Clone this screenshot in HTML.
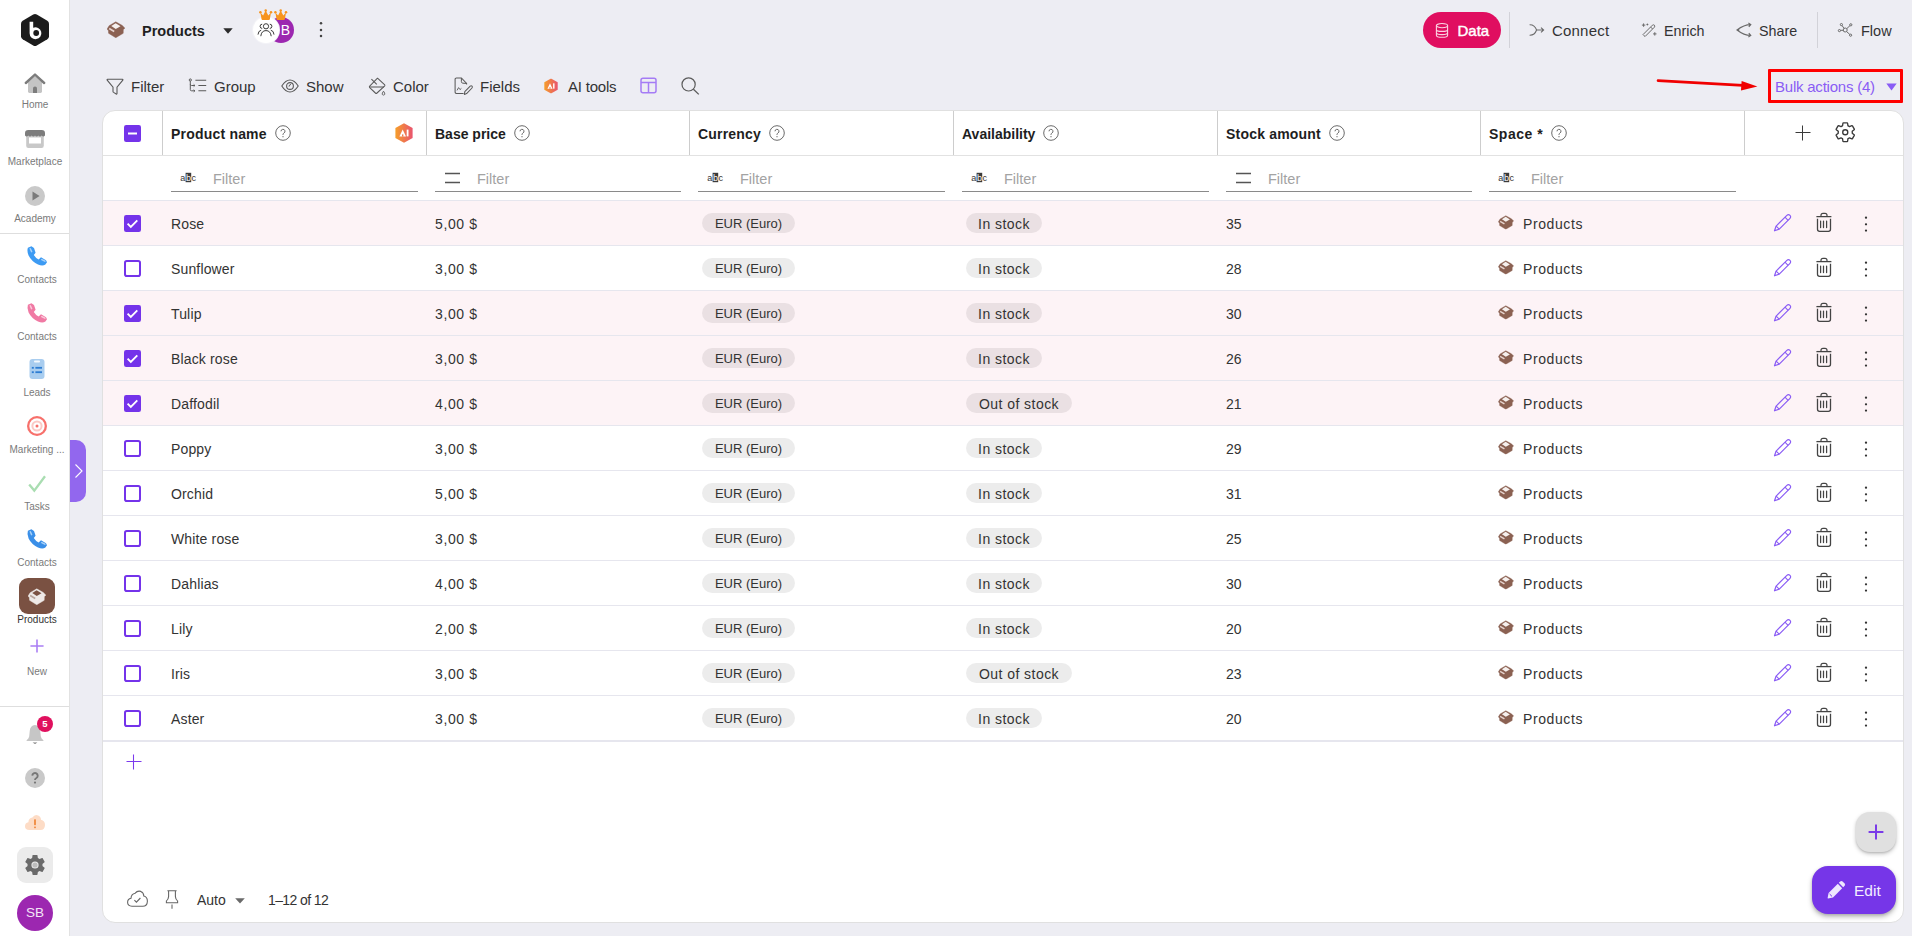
<!DOCTYPE html><html><head><meta charset="utf-8"><style>*{box-sizing:border-box;margin:0;padding:0}
html,body{width:1912px;height:936px;overflow:hidden}
body{background:#EDEDF3;font-family:"Liberation Sans",sans-serif;color:#222;position:relative}
svg{display:block;overflow:visible}
.abs{position:absolute}
/* sidebar */
#sb{position:absolute;left:0;top:0;width:70px;height:936px;background:#fff;border-right:1px solid #E2E2E2}
.sbi{position:absolute;left:0;width:69px}
.sbl{position:absolute;left:0;width:74px;text-align:center;font-size:10px;color:#7a7a7a;line-height:12px;white-space:nowrap}
.sep{position:absolute;left:0;width:69px;height:1px;background:#DEDEDE}
#tab{position:absolute;left:70px;top:440px;width:16px;height:62px;background:#9267EE;border-radius:0 10px 10px 0}
/* top */
.tt{position:absolute;font-size:15px;line-height:18px;color:#333;white-space:nowrap}
.ti{position:absolute}
/* card */
#card{position:absolute;left:102px;top:110px;width:1802px;height:813px;background:#fff;border:1px solid #E0E0E0;border-radius:13px;overflow:hidden}
.hrow{position:absolute;left:0;top:0;width:100%;height:45px;border-bottom:1px solid #E2E2E2}
.hc{position:absolute;top:0;height:44px;display:flex;align-items:center;padding-left:8px}
.ht{font-size:14px;font-weight:700;color:#1e1e1e;white-space:nowrap}
.help{margin-left:8px;color:#666}
.hc .ht{position:relative;top:1px}
.aihdr{position:absolute;right:13px;top:12px}
.vd{position:absolute;top:0;width:1px;height:44px;background:#CDCDCD}
.hplus{position:absolute;left:50px;top:14px;color:#3a3a3a}
.hgear{position:absolute;left:88.8px;top:10.1px}
.frow{position:absolute;left:0;top:45px;width:100%;height:45px;border-bottom:1px solid #E6E6EE}
.fc{position:absolute;top:0;height:36px;border-bottom:1px solid #8a8a8a}
.fi{position:absolute;left:9px;top:16px}
.ph{position:absolute;left:42px;top:15px;font-size:14.5px;line-height:17px;color:#A3A3A3}
.row{position:absolute;left:0;width:100%;height:45px;border-bottom:1px solid #E6E6EE;background:#fff}
.row.sel{background:#FDF3F6}
.cb{position:absolute;top:14px}
.ct{position:absolute;top:14px;font-size:14px;line-height:18px;color:#333;white-space:nowrap}
.chip{position:absolute;top:12px;height:20px;border-radius:10px;background:rgba(0,0,0,0.075);font-size:14px;line-height:22px;letter-spacing:0.45px;text-align:center;color:#333;width:76px;white-space:nowrap}
.chip.eur{width:93px;font-size:13px;letter-spacing:0}
.pr{letter-spacing:0.6px}
.sp{letter-spacing:0.6px}
.sbox{position:absolute;top:14px}
.ract{position:absolute;top:13px}
#addrow{position:absolute;left:23px;top:643px;color:#7C3AED}
/* footer */
.ft{position:absolute;font-size:14px;line-height:18px;color:#333;white-space:nowrap}

.ct.nm{letter-spacing:0.15px}
</style></head><body>
<svg width="0" height="0" style="position:absolute">
<defs>
<linearGradient id="g-ai" x1="0" y1="0" x2="1" y2="0"><stop offset="0" stop-color="#F59E2A"/><stop offset="1" stop-color="#E9546E"/></linearGradient>
<symbol id="i-help" viewBox="0 0 16 16"><circle cx="8" cy="8" r="7.3" fill="none" stroke="#6a6a6a" stroke-width="1"/><path d="M6 6.3a2 2 0 1 1 2.9 1.8c-.6.35-.9.7-.9 1.4v.5" fill="none" stroke="#6a6a6a" stroke-width="1"/><circle cx="8" cy="11.7" r=".65" fill="#6a6a6a"/></symbol>
<symbol id="i-ai" viewBox="0 0 18 20"><path d="M9 0.3L17.6 5.1V14.9L9 19.7L0.4 14.9V5.1Z" fill="url(#g-ai)"/><path d="M4.4 13.4L7.7 6.4L11 13.4Z" fill="#fff"/><rect x="7" y="11.4" width="1.4" height="2.2" fill="#EE7B4B"/><rect x="11.7" y="6.6" width="1.8" height="6.8" fill="#fff"/></symbol>
<symbol id="i-abc" viewBox="0 0 18 12"><text x="0.3" y="9" font-family="Liberation Sans" font-size="9" fill="#333">a</text><rect x="5.6" y="0.8" width="5.6" height="9.4" fill="#3a3a3a"/><text x="5.9" y="9" font-family="Liberation Sans" font-size="9" fill="#fff">b</text><text x="11.6" y="9" font-family="Liberation Sans" font-size="9" fill="#333">c</text></symbol>
<symbol id="i-eq" viewBox="0 0 18 12"><path d="M1 1.5H16M1 10.5H16" stroke="#555" stroke-width="1.4"/></symbol>
<symbol id="i-plus" viewBox="0 0 16 16"><path d="M7.5 0.5V15.5M0.5 7.5H15.5" stroke="currentColor" stroke-width="1.05"/></symbol>
<symbol id="i-gear-o" viewBox="0 0 24 24"><path d="M19.43 12.98c.04-.32.07-.64.07-.98 0-.34-.03-.66-.07-.98l2.11-1.65c.19-.15.24-.42.12-.64l-2-3.46c-.09-.16-.26-.25-.44-.25-.06 0-.12.01-.17.03l-2.49 1c-.52-.4-1.08-.73-1.69-.98l-.38-2.65C14.460 2.180 14.250 2 14 2h-4c-.25 0-.46.18-.49.42l-.38 2.65c-.61.25-1.170.59-1.690.98l-2.490-1c-.06-.02-.12-.03-.18-.03-.17 0-.34.09-.43.25l-2 3.46c-.13.22-.07.49.12.64l2.11 1.65c-.04.32-.07.65-.07.98 0 .33.03.66.07.98l-2.11 1.65c-.19.15-.24.42-.12.64l2 3.46c.09.16.26.25.44.25.06 0 .12-.01.17-.03l2.49-1c.52.4 1.08.73 1.69.98l.38 2.65c.03.24.24.42.49.42h4c.25 0 .46-.18.49-.42l.38-2.65c.61-.25 1.17-.59 1.69-.98l2.49 1c.06.02.12.03.18.03.17 0 .34-.09.43-.25l2-3.46c.12-.22.07-.49-.12-.64l-2.11-1.65z" fill="none" stroke="#3a3a3a" stroke-width="1.45" stroke-linejoin="round"/><circle cx="12" cy="12" r="2.7" fill="none" stroke="#3a3a3a" stroke-width="1.45"/></symbol>
<symbol id="i-box" viewBox="0 0 16 15"><path d="M7.8 0.7L13.6 3.9L15.9 6.3L14.5 7.4L14.4 10.9L7.8 14.8L1.4 10.9L1.3 8.6L0.1 7.1L1.9 4.1Z" fill="#8B6152" stroke="#8B6152" stroke-width="0.4" stroke-linejoin="round"/><path d="M3.8 4.3L7.7 1.9L12 4.7L7.8 7.1Z" fill="#F6F0EE"/><path d="M1.9 6.6L6.4 9.2" stroke="#E6D3CE" stroke-width="1.5"/></symbol>
<symbol id="i-box-w" viewBox="0 0 16 15"><path d="M7.8 0.7L13.6 3.9L15.9 6.3L14.5 7.4L14.4 10.9L7.8 14.8L1.4 10.9L1.3 8.6L0.1 7.1L1.9 4.1Z" fill="#EEE9E7" stroke="#EEE9E7" stroke-width="0.4" stroke-linejoin="round"/><path d="M3.8 4.3L7.7 1.9L12 4.7L7.8 7.1Z" fill="#7A5142"/><path d="M1.9 6.6L6.4 9.2" stroke="#B8A39B" stroke-width="1.5"/></symbol>
<symbol id="i-pencil" viewBox="0 0 20 20"><path d="M1.5 18.8L3.12 14.06L13.87 3.31A2.2 2.2 0 0 1 16.99 6.43L6.24 17.18Z" fill="none" stroke="#8A5CF5" stroke-width="1.2" stroke-linejoin="round"/><path d="M3.12 14.06L6.24 17.18M11.96 5.22L15.08 8.34" stroke="#8A5CF5" stroke-width="1.1"/></symbol>
<symbol id="i-trash" viewBox="0 0 16 20"><path d="M0.4 4.6H15.4" stroke="#444" stroke-width="1.3"/><path d="M5 4.4V3.2Q5 1.3 7 1.3H9Q11 1.3 11 3.2V4.4" fill="none" stroke="#444" stroke-width="1.2"/><path d="M1.5 6.8V17.2Q1.5 19.3 3.6 19.3H12.4Q14.5 19.3 14.5 17.2V6.8" fill="none" stroke="#444" stroke-width="1.3"/><path d="M4.6 9V15.6M7.5 9V15.6M10.6 9V15.6" stroke="#444" stroke-width="1.25" stroke-linecap="round"/></symbol>
<symbol id="i-kebab" viewBox="0 0 4 18"><circle cx="2" cy="2.7" r="1.15" fill="#333"/><circle cx="2" cy="9.3" r="1.15" fill="#333"/><circle cx="2" cy="15.6" r="1.15" fill="#333"/></symbol>
<symbol id="i-cb-on" viewBox="0 0 17 17"><rect x="0" y="0" width="17" height="17" rx="2.2" fill="#7433EA"/><path d="M3.6 8.7L6.8 11.9L13.3 5.4" fill="none" stroke="#fff" stroke-width="1.9"/></symbol>
<symbol id="i-cb-off" viewBox="0 0 17 17"><rect x="1" y="1" width="15" height="15" rx="1.8" fill="none" stroke="#7433EA" stroke-width="2"/></symbol>
<symbol id="i-cb-ind" viewBox="0 0 17 17"><rect x="0" y="0" width="17" height="17" rx="2.2" fill="#7433EA"/><path d="M4 8.5H13" stroke="#fff" stroke-width="1.9"/></symbol>
</defs>
</svg>

<div id="sb">
<svg class="abs" style="left:21px;top:14px" width="28" height="32" viewBox="0 0 28 32"><path d="M12.2 0.6Q14 -0.4 15.8 0.6L26.3 6.7Q28 7.7 28 9.7V22.3Q28 24.3 26.3 25.3L15.8 31.4Q14 32.4 12.2 31.4L1.7 25.3Q0 24.3 0 22.3V9.7Q0 7.7 1.7 6.7Z" fill="#1C1C1C"/><path d="M8.6 7.8H12.2V13.8A5.9 5.9 0 1 1 8.6 19.2Z" fill="#fff"/><circle cx="15.2" cy="19" r="2.9" fill="#1C1C1C"/></svg>
<svg class="abs" style="left:25px;top:73px" width="20" height="20" viewBox="0 0 20 20"><path d="M3 9.2V18.6Q3 20 4.4 20H15.6Q17 20 17 18.6V9.2L10 3.2Z" fill="#C4C4C4"/><path d="M0.8 10L10 1.6L19.2 10" fill="none" stroke="#7C7C7C" stroke-width="2.4" stroke-linejoin="round" stroke-linecap="round"/><path d="M8 20V15.2Q8 13.4 10 13.4Q12 13.4 12 15.2V20Z" fill="#7C7C7C"/></svg>
<div class="sbl" style="left:-2px;top:99px">Home</div>
<svg class="abs" style="left:25px;top:130px" width="20" height="18" viewBox="0 0 20 18"><rect x="1.2" y="4" width="17.6" height="14" rx="2.2" fill="#C8C8C8"/><rect x="4" y="7.5" width="12" height="6" fill="#fff"/><path d="M0 3.3Q0 0 3.3 0H16.7Q20 0 20 3.3V5.6Q18.3 7.4 16.7 5.6Q15 7.4 13.3 5.6Q11.7 7.4 10 5.6Q8.3 7.4 6.7 5.6Q5 7.4 3.3 5.6Q1.7 7.4 0 5.6Z" fill="#7C7C7C"/></svg>
<div class="sbl" style="left:-2px;top:156px">Marketplace</div>
<svg class="abs" style="left:25px;top:186px" width="20" height="20" viewBox="0 0 20 20"><circle cx="10" cy="10" r="10" fill="#C9C9C9"/><path d="M7.5 5.6L14.6 10L7.5 14.4Z" fill="#7A7A7A"/></svg>
<div class="sbl" style="left:-2px;top:213px">Academy</div>
<div class="sep" style="top:233px"></div>
<svg class="abs" style="left:27px;top:246px" width="20" height="20" viewBox="0 0 20 20"><path d="M4.4 0.2L0.9 1.8Q-0.3 5.2 1.6 9.6Q4.6 15.6 11 18.6Q15.6 20.6 18.4 18.6L20 16.2L19 14.2L14 11.2L11.6 13.4Q8.6 12 6.8 9L8.6 6.8L7 2Z" fill="#3D9BF3"/><path d="M3.3 2.8L4.6 5.6M14.8 13.6L17.9 15.2" stroke="#A8D2FA" stroke-width="1.5" stroke-linecap="round"/></svg>
<div class="sbl" style="left:0px;top:274px">Contacts</div>
<svg class="abs" style="left:27px;top:303px" width="20" height="20" viewBox="0 0 20 20"><path d="M4.4 0.2L0.9 1.8Q-0.3 5.2 1.6 9.6Q4.6 15.6 11 18.6Q15.6 20.6 18.4 18.6L20 16.2L19 14.2L14 11.2L11.6 13.4Q8.6 12 6.8 9L8.6 6.8L7 2Z" fill="#F07AA4"/><path d="M3.3 2.8L4.6 5.6M14.8 13.6L17.9 15.2" stroke="#FAC8DA" stroke-width="1.5" stroke-linecap="round"/></svg>
<div class="sbl" style="left:0px;top:331px">Contacts</div>
<svg class="abs" style="left:29px;top:359px" width="16" height="20" viewBox="0 0 16 20"><rect x="0.5" y="0" width="15" height="20" rx="3" fill="#A9CDEF"/><rect x="5" y="1.6" width="6" height="1.8" rx=".9" fill="#F4F9FE"/><rect x="2.8" y="7.9" width="2" height="1.8" fill="#2D7DD3"/><rect x="6.4" y="7.9" width="6.6" height="1.8" fill="#2D7DD3"/><rect x="2.8" y="12.3" width="2" height="1.8" fill="#2D7DD3"/><rect x="6.4" y="12.3" width="6.6" height="1.8" fill="#2D7DD3"/></svg>
<div class="sbl" style="left:0px;top:387px">Leads</div>
<svg class="abs" style="left:27px;top:416px" width="20" height="20" viewBox="0 0 20 20"><circle cx="10" cy="10" r="10" fill="#F7706B"/><circle cx="10" cy="10" r="7.7" fill="#fff"/><circle cx="10" cy="10" r="5.6" fill="#FBC9C6"/><circle cx="10" cy="10" r="3.6" fill="#fff"/><circle cx="10" cy="10" r="1.5" fill="#F7706B"/></svg>
<div class="sbl" style="left:0px;top:444px">Marketing ...</div>
<svg class="abs" style="left:28px;top:475px" width="18" height="17" viewBox="0 0 18 17"><path d="M1.2 9.4L6.3 15.6L17 1.2" fill="none" stroke="#A9DDB1" stroke-width="2.3"/></svg>
<div class="sbl" style="left:0px;top:501px">Tasks</div>
<svg class="abs" style="left:27px;top:529px" width="20" height="20" viewBox="0 0 20 20"><path d="M4.4 0.2L0.9 1.8Q-0.3 5.2 1.6 9.6Q4.6 15.6 11 18.6Q15.6 20.6 18.4 18.6L20 16.2L19 14.2L14 11.2L11.6 13.4Q8.6 12 6.8 9L8.6 6.8L7 2Z" fill="#3A8FE8"/><path d="M3.3 2.8L4.6 5.6M14.8 13.6L17.9 15.2" stroke="#A8D0F6" stroke-width="1.5" stroke-linecap="round"/></svg>
<div class="sbl" style="left:0px;top:557px">Contacts</div>
<div class="abs" style="left:19px;top:578px;width:36px;height:36px;border-radius:9px;background:#7A5142"></div>
<svg class="abs" style="left:28px;top:588px" width="18" height="17" viewBox="0 0 16 15"><use href="#i-box-w"/></svg>
<div class="sbl" style="left:0px;top:614px;color:#333">Products</div>
<svg class="abs" style="left:30px;top:639px;color:#A97DF4" width="14" height="14" viewBox="0 0 16 16"><path d="M8 0.5V15.5M0.5 8H15.5" stroke="#A97DF4" stroke-width="1.8"/></svg>
<div class="sbl" style="left:0px;top:666px">New</div>
<div class="sep" style="top:706px"></div>
<svg class="abs" style="left:26px;top:724px" width="18" height="21" viewBox="0 0 18 21"><path d="M9 1Q13.8 1.2 14.3 7.2L14.8 12.6Q15.2 14.6 17.4 16.2V17H0.6V16.2Q2.8 14.6 3.2 12.6L3.7 7.2Q4.2 1.2 9 1Z" fill="#C6C6C6"/><path d="M6.6 18.6H11.4L9 20Z" fill="#7A7A7A"/></svg>
<div class="abs" style="left:37px;top:716px;width:16px;height:16px;border-radius:8px;background:#E0105E;color:#fff;font-size:9.5px;font-weight:700;line-height:16px;text-align:center">5</div>
<svg class="abs" style="left:25px;top:768px" width="20" height="20" viewBox="0 0 20 20"><circle cx="10" cy="10" r="10" fill="#C9C9C9"/><path d="M7.3 7.6A2.7 2.7 0 1 1 11.4 10Q10 10.8 10 12" fill="none" stroke="#777" stroke-width="1.9"/><circle cx="10" cy="14.6" r="1.1" fill="#777"/></svg>
<svg class="abs" style="left:25px;top:814px" width="20" height="16" viewBox="0 0 20 16"><path d="M4.4 16Q0 16 0 12.2Q0 8.8 3.4 8.3Q3.6 4.2 7.4 3.6Q9.6 0 13.2 1.4Q16 2.6 16 5.8Q20 6.6 20 11Q19.8 16 15.6 16Z" fill="#FDDCC6"/><rect x="9.1" y="5.2" width="1.8" height="6" rx=".6" fill="#F0893E"/><rect x="9.1" y="12.4" width="1.8" height="1.8" rx=".6" fill="#F0893E"/></svg>
<div class="abs" style="left:17px;top:847px;width:36px;height:36px;border-radius:9px;background:#EBEBEB"></div>
<svg class="abs" style="left:23px;top:853px" width="24" height="24" viewBox="0 0 24 24"><path d="M19.43 12.98c.04-.32.07-.64.07-.98 0-.34-.03-.66-.07-.98l2.11-1.65c.19-.15.24-.42.12-.64l-2-3.46c-.09-.16-.26-.25-.44-.25-.06 0-.12.01-.17.03l-2.49 1c-.52-.4-1.08-.73-1.69-.98l-.38-2.65C14.460 2.180 14.250 2 14 2h-4c-.25 0-.46.18-.49.42l-.38 2.65c-.61.25-1.170.59-1.690.98l-2.490-1c-.06-.02-.12-.03-.18-.03-.17 0-.34.09-.43.25l-2 3.46c-.13.22-.07.49.12.64l2.11 1.65c-.04.32-.07.65-.07.98 0 .33.03.66.07.98l-2.11 1.65c-.19.15-.24.42-.12.64l2 3.46c.09.16.26.25.44.25.06 0 .12-.01.17-.03l2.49-1c.52.4 1.08.73 1.69.98l.38 2.65c.03.24.24.42.49.42h4c.25 0 .46-.18.49-.42l.38-2.65c.61-.25 1.17-.59 1.69-.98l2.49 1c.06.02.12.03.18.03.17 0 .34-.09.43-.25l2-3.46c.12-.22.07-.49-.12-.64l-2.11-1.65z" fill="#6A6A6A"/><circle cx="12" cy="12" r="3.6" fill="#EBEBEB"/><circle cx="12" cy="12" r="2.6" fill="#BDBDBD"/></svg>
<div class="abs" style="left:17px;top:895px;width:36px;height:36px;border-radius:18px;background:#9C27B0;color:#F3E5F6;font-size:13.5px;line-height:36px;text-align:center">SB</div>
</div>
<div id="tab"><svg class="abs" style="left:5px;top:24px" width="8" height="14" viewBox="0 0 8 14"><path d="M0.5 0.5L7 7L0.5 13.5" fill="none" stroke="#fff" stroke-width="1.1"/></svg></div>

<svg class="abs" style="left:107px;top:21px" width="18" height="17" viewBox="0 0 16 15"><use href="#i-box"/></svg>
<div class="tt" style="left:142px;top:22px;font-size:14.5px;font-weight:700;color:#1f1f1f">Products</div>
<svg class="abs" style="left:223px;top:28px" width="10" height="6" viewBox="0 0 10 6"><path d="M0.3 0.3H9.7L5 5.8Z" fill="#2b2b2b"/></svg>
<div class="abs" style="left:268px;top:17px;width:26px;height:26px;border-radius:13px;background:#9C27B0;color:#fff;font-size:14px;line-height:26px;text-align:right;padding-right:4px">B</div>
<div class="abs" style="left:253px;top:17px;width:26px;height:26px;border-radius:13px;background:#fff;box-shadow:0 0 0 1px #F3F3F7"></div>
<svg class="abs" style="left:257px;top:22px" width="18" height="15" viewBox="0 0 18 15"><circle cx="9" cy="4.3" r="2.6" fill="none" stroke="#3a3a3a" stroke-width="1"/><path d="M3.8 14.2Q4.4 8.6 9 8.6Q13.6 8.6 14.2 14.2" fill="none" stroke="#3a3a3a" stroke-width="1"/><path d="M5.2 2.2A2 2 0 0 0 5.2 6.4M12.8 2.2A2 2 0 0 1 12.8 6.4M1 12.6Q1.2 8.8 4.2 8.2M17 12.6Q16.8 8.8 13.8 8.2" fill="none" stroke="#3a3a3a" stroke-width="1"/></svg>
<svg class="abs" style="left:259px;top:8.8px" width="13.4" height="11" viewBox="0 0 13.2 11"><path d="M1.3 3.4L4 6.4L6.6 1.6L9.2 6.4L11.9 3.4L10.8 10Q10.6 10.9 9.8 10.9H3.4Q2.6 10.9 2.4 10Z" fill="#F7941D"/><circle cx="1.3" cy="3.2" r="1.25" fill="#F7941D"/><circle cx="6.6" cy="1.4" r="1.25" fill="#F7941D"/><circle cx="11.9" cy="3.2" r="1.25" fill="#F7941D"/></svg>
<svg class="abs" style="left:274px;top:8.8px" width="13.4" height="11" viewBox="0 0 13.2 11"><path d="M1.3 3.4L4 6.4L6.6 1.6L9.2 6.4L11.9 3.4L10.8 10Q10.6 10.9 9.8 10.9H3.4Q2.6 10.9 2.4 10Z" fill="#F7941D"/><circle cx="1.3" cy="3.2" r="1.25" fill="#F7941D"/><circle cx="6.6" cy="1.4" r="1.25" fill="#F7941D"/><circle cx="11.9" cy="3.2" r="1.25" fill="#F7941D"/></svg>
<svg class="abs" style="left:319px;top:21px" width="4" height="18" viewBox="0 0 4 18"><circle cx="2" cy="2.2" r="1.25" fill="#444"/><circle cx="2" cy="9.1" r="1.25" fill="#444"/><circle cx="2" cy="15.1" r="1.25" fill="#444"/></svg>

<!-- right top -->
<div class="abs" style="left:1423px;top:12px;width:78px;height:36px;border-radius:18px;background:#E00E60"></div>
<svg class="abs" style="left:1435px;top:23px" width="14" height="15" viewBox="0 0 14 15"><ellipse cx="7" cy="2.6" rx="5.6" ry="2.1" fill="none" stroke="#FAD3E2" stroke-width="1.1"/><path d="M1.4 2.6V12.2Q1.4 14.3 7 14.3Q12.6 14.3 12.6 12.2V2.6M1.4 6.4Q1.4 8.4 7 8.4Q12.6 8.4 12.6 6.4M1.4 9.8Q1.4 11.6 7 11.6Q12.6 11.6 12.6 9.8" fill="none" stroke="#FAD3E2" stroke-width="1.1"/></svg>
<div class="tt" style="left:1457.5px;top:22px;color:#fff;font-size:15px;-webkit-text-stroke:0.45px #fff">Data</div>
<div class="abs" style="left:1509px;top:12px;width:1px;height:36px;background:#D2D2D8"></div>
<svg class="abs" style="left:1529px;top:24px" width="16" height="12" viewBox="0 0 16 12"><path d="M0.6 0.8Q5.6 0.6 7.6 6Q5.6 11.4 0.6 11.2M7.6 6H14.6M12 3.6L14.6 6L12 8.4" fill="none" stroke="#6a6a6a" stroke-width="1.1"/></svg>
<div class="tt" style="left:1552px;top:22px;letter-spacing:0.2px">Connect</div>
<svg class="abs" style="left:1641px;top:23px" width="16" height="14" viewBox="0 0 16 14"><path d="M3.2 12.8L2 11.6L11.4 2.2Q12.6 1.4 13.4 2.2Q14.2 3 13.4 4.2L4 13.6Z" fill="none" stroke="#6a6a6a" stroke-width="1"/><path d="M9.6 4L11.6 6M2.6 0.4V3.8M0.9 2.1H4.3M13.8 9.2V12.6M12.1 10.9H15.5M6.4 0.6V2.4M5.5 1.5H7.3" fill="none" stroke="#6a6a6a" stroke-width="1"/></svg>
<div class="tt" style="left:1664px;top:22px;font-size:14.3px">Enrich</div>
<svg class="abs" style="left:1736px;top:23px" width="16" height="14" viewBox="0 0 16 14"><path d="M14.6 1.6Q8 1.6 1 7Q8 12.4 14.6 12.4M0.4 7H3.4M12.4 0L14.8 1.6L12.8 3.8M12.8 10.2L14.8 12.4L12.4 14" fill="none" stroke="#6a6a6a" stroke-width="1.1"/></svg>
<div class="tt" style="left:1759px;top:22px;font-size:14.3px">Share</div>
<div class="abs" style="left:1817px;top:12px;width:1px;height:36px;background:#D2D2D8"></div>
<svg class="abs" style="left:1838px;top:23px" width="15" height="14" viewBox="0 0 15 14"><circle cx="7.2" cy="7" r="2" fill="none" stroke="#6a6a6a" stroke-width="1"/><circle cx="1.4" cy="7.6" r="1.1" fill="none" stroke="#6a6a6a" stroke-width="1"/><circle cx="3.4" cy="1.6" r="1.1" fill="none" stroke="#6a6a6a" stroke-width="1"/><circle cx="12.8" cy="1.8" r="1.1" fill="none" stroke="#6a6a6a" stroke-width="1"/><circle cx="12.6" cy="12.2" r="1.1" fill="none" stroke="#6a6a6a" stroke-width="1"/><path d="M5.2 7.3H2.5M6 5.4L4 2.4M8.8 5.6L12 2.6M8.6 8.6L11.8 11.4" stroke="#6a6a6a" stroke-width="1"/></svg>
<div class="tt" style="left:1861px;top:22px;font-size:14.5px">Flow</div>

<!-- toolbar -->
<svg class="abs" style="left:106px;top:78px" width="18" height="17" viewBox="0 0 18 17"><path d="M1.6 1.2H16.4Q17.2 1.4 16.8 2.2L11 9.2V15.6Q11 16.4 10.2 16L7.6 14.4Q7 14 7 13.4V9.2L1.2 2.2Q0.8 1.4 1.6 1.2Z" fill="none" stroke="#5a5a5a" stroke-width="1.1"/></svg>
<div class="tt" style="left:131px;top:78px">Filter</div>
<svg class="abs" style="left:189px;top:78px" width="18" height="17" viewBox="0 0 18 17"><circle cx="1.3" cy="2" r="1.1" fill="none" stroke="#5a5a5a" stroke-width="1"/><path d="M1.3 3.1V11.6Q1.3 12.8 2.5 12.8H5.8M1.3 6.3Q1.3 7.5 2.5 7.5H5.8M4.7 6.4L5.9 7.5L4.7 8.6M4.7 11.7L5.9 12.8L4.7 13.9" fill="none" stroke="#5a5a5a" stroke-width="1"/><path d="M6.4 2.2H17.2M9.4 7.5H17.2M9.4 12.8H17.2" stroke="#5a5a5a" stroke-width="1.1"/></svg>
<div class="tt" style="left:214px;top:78px">Group</div>
<svg class="abs" style="left:281px;top:79px" width="18" height="14" viewBox="0 0 18 14"><path d="M0.8 7Q4.6 1 9 1Q13.4 1 17.2 7Q13.4 13 9 13Q4.6 13 0.8 7Z" fill="none" stroke="#5a5a5a" stroke-width="1.1"/><circle cx="9" cy="7" r="3.4" fill="none" stroke="#5a5a5a" stroke-width="1.1"/><path d="M8 7.6Q8 5.6 10 5.4" fill="none" stroke="#5a5a5a" stroke-width="1"/></svg>
<div class="tt" style="left:306px;top:78px">Show</div>
<svg class="abs" style="left:368px;top:77px" width="19" height="19" viewBox="0 0 19 19"><path d="M9.5 1.2L16.5 7.7Q17.2 8.4 16.5 9.1L9 16Q8.2 16.7 7.4 16L1.7 10.6Q1 9.8 1.7 9.1Z" fill="none" stroke="#5a5a5a" stroke-width="1.05" stroke-linejoin="round"/><path d="M1.3 10H16" stroke="#5a5a5a" stroke-width="1.05"/><path d="M3.4 2.2L8.8 7.4" stroke="#5a5a5a" stroke-width="1.05"/><path d="M15.5 14.2Q17.1 16.3 16.8 17.2Q16.4 18.1 15.5 18.1Q14.6 18.1 14.2 17.2Q13.9 16.3 15.5 14.2Z" fill="none" stroke="#5a5a5a" stroke-width="0.9"/></svg>
<div class="tt" style="left:393px;top:78px">Color</div>
<svg class="abs" style="left:454px;top:77px" width="19" height="18" viewBox="0 0 19 18"><path d="M9.6 16.4H2.4Q1.1 16.4 1.1 15.1V2.3Q1.1 1 2.4 1H7.4L12.6 6.4V7.6" fill="none" stroke="#5a5a5a" stroke-width="1.05"/><path d="M7.4 1V4.6Q7.4 6 8.8 6.2L12.6 6.4" fill="none" stroke="#5a5a5a" stroke-width="1"/><path d="M3 13.4L4.6 10.6L6 12.6L7.4 11.4" fill="none" stroke="#5a5a5a" stroke-width="0.9"/><path d="M10.4 17.4L10.8 14.6L16.2 9.2Q17.2 8.4 18 9.2Q18.8 10.2 18 11L12.6 16.6Z" fill="none" stroke="#5a5a5a" stroke-width="1.05" stroke-linejoin="round"/></svg>
<div class="tt" style="left:480px;top:78px">Fields</div>
<svg class="abs" style="left:544px;top:78px" width="14" height="16" viewBox="0 0 18 20"><use href="#i-ai"/></svg>
<div class="tt" style="left:568px;top:78px;letter-spacing:-0.2px">AI tools</div>
<svg class="abs" style="left:640px;top:77px" width="17" height="17" viewBox="0 0 17 17"><rect x="1" y="1.2" width="15" height="14.6" rx="2" fill="none" stroke="#A57CF5" stroke-width="1.5"/><path d="M1 5.6H16M8.5 5.6V15.8" stroke="#A57CF5" stroke-width="1.5"/></svg>
<svg class="abs" style="left:681px;top:77px" width="19" height="18" viewBox="0 0 19 18"><circle cx="7.6" cy="7.4" r="6.6" fill="none" stroke="#5a5a5a" stroke-width="1.2"/><path d="M12.4 12.2L17.8 17.4" stroke="#5a5a5a" stroke-width="1.3"/></svg>

<!-- bulk -->
<svg class="abs" style="left:1655px;top:77px" width="105" height="15" viewBox="0 0 105 15"><path d="M3 3.6L88 8.4" stroke="#F00000" stroke-width="2.6" stroke-linecap="round"/><path d="M86.6 4L102.4 9.6L86 13.4Z" fill="#F00000"/></svg>
<div class="abs" style="left:1768px;top:69px;width:135px;height:34px;border:3px solid #FF0000;border-radius:1px"></div>
<div class="tt" style="left:1775px;top:78px;color:#8A5CF5;letter-spacing:-0.22px">Bulk actions (4)</div>
<svg class="abs" style="left:1886px;top:83px" width="11" height="8" viewBox="0 0 11 8"><path d="M0.3 0.5H10.7L5.5 7.4Z" fill="#8A5CF5"/></svg>

<div id="card">
<div class="hrow">
<div class="hc" style="left:0;width:59px;padding:0"><span class="cb ind" style="left:21px"><svg width="17" height="17"><use href="#i-cb-ind"/></svg></span></div><div class="vd" style="left:59px"></div>
<div class="hc" style="left:60px;width:263px"><span class="ht" style="letter-spacing:0.2px">Product name</span><svg class="help" width="16" height="16"><use href="#i-help"/></svg><svg class="aihdr" width="18" height="20"><use href="#i-ai"/></svg></div><div class="vd" style="left:323px"></div>
<div class="hc" style="left:324px;width:262px"><span class="ht" style="letter-spacing:0px">Base price</span><svg class="help" width="16" height="16"><use href="#i-help"/></svg></div><div class="vd" style="left:586px"></div>
<div class="hc" style="left:587px;width:263px"><span class="ht" style="letter-spacing:0.2px">Currency</span><svg class="help" width="16" height="16"><use href="#i-help"/></svg></div><div class="vd" style="left:850px"></div>
<div class="hc" style="left:851px;width:263px"><span class="ht" style="letter-spacing:0px">Availability</span><svg class="help" width="16" height="16"><use href="#i-help"/></svg></div><div class="vd" style="left:1114px"></div>
<div class="hc" style="left:1115px;width:262px"><span class="ht" style="letter-spacing:0.2px">Stock amount</span><svg class="help" width="16" height="16"><use href="#i-help"/></svg></div><div class="vd" style="left:1377px"></div>
<div class="hc" style="left:1378px;width:263px"><span class="ht" style="letter-spacing:0.5px">Space *</span><svg class="help" width="16" height="16"><use href="#i-help"/></svg></div><div class="vd" style="left:1641px"></div>
<div class="hc" style="left:1642px;width:157px"><svg class="hplus" width="16" height="16"><use href="#i-plus"/></svg><svg class="hgear" width="22.5" height="22.5"><use href="#i-gear-o"/></svg></div>
</div>
<div class="frow">
<div class="fc" style="left:68px;width:247px"><svg class="fi" width="18" height="12"><use href="#i-abc"/></svg><span class="ph">Filter</span></div>
<div class="fc" style="left:332px;width:246px"><svg class="fi" width="18" height="12"><use href="#i-eq"/></svg><span class="ph">Filter</span></div>
<div class="fc" style="left:595px;width:247px"><svg class="fi" width="18" height="12"><use href="#i-abc"/></svg><span class="ph">Filter</span></div>
<div class="fc" style="left:859px;width:247px"><svg class="fi" width="18" height="12"><use href="#i-abc"/></svg><span class="ph">Filter</span></div>
<div class="fc" style="left:1123px;width:246px"><svg class="fi" width="18" height="12"><use href="#i-eq"/></svg><span class="ph">Filter</span></div>
<div class="fc" style="left:1386px;width:247px"><svg class="fi" width="18" height="12"><use href="#i-abc"/></svg><span class="ph">Filter</span></div>
</div>
<div class="row sel" style="top:90px"><span class="cb" style="left:21px"><svg width="17" height="17"><use href="#i-cb-on"/></svg></span><span class="ct nm" style="left:68px">Rose</span><span class="ct pr" style="left:332px">5,00 $</span><span class="chip eur" style="left:599px">EUR (Euro)</span><span class="chip" style="left:863px;width:76px">In stock</span><span class="ct" style="left:1123px">35</span><svg class="sbox" width="16" height="14.5" style="left:1395px"><use href="#i-box"/></svg><span class="ct sp" style="left:1420px">Products</span><svg class="ract" width="20" height="20" style="left:1670px;top:11px"><use href="#i-pencil"/></svg><svg class="ract" width="16" height="20" style="left:1713px;top:11px"><use href="#i-trash"/></svg><svg class="ract" width="4" height="18" style="left:1761px;top:13.5px"><use href="#i-kebab"/></svg></div>
<div class="row" style="top:135px"><span class="cb" style="left:21px"><svg width="17" height="17"><use href="#i-cb-off"/></svg></span><span class="ct nm" style="left:68px">Sunflower</span><span class="ct pr" style="left:332px">3,00 $</span><span class="chip eur" style="left:599px">EUR (Euro)</span><span class="chip" style="left:863px;width:76px">In stock</span><span class="ct" style="left:1123px">28</span><svg class="sbox" width="16" height="14.5" style="left:1395px"><use href="#i-box"/></svg><span class="ct sp" style="left:1420px">Products</span><svg class="ract" width="20" height="20" style="left:1670px;top:11px"><use href="#i-pencil"/></svg><svg class="ract" width="16" height="20" style="left:1713px;top:11px"><use href="#i-trash"/></svg><svg class="ract" width="4" height="18" style="left:1761px;top:13.5px"><use href="#i-kebab"/></svg></div>
<div class="row sel" style="top:180px"><span class="cb" style="left:21px"><svg width="17" height="17"><use href="#i-cb-on"/></svg></span><span class="ct nm" style="left:68px">Tulip</span><span class="ct pr" style="left:332px">3,00 $</span><span class="chip eur" style="left:599px">EUR (Euro)</span><span class="chip" style="left:863px;width:76px">In stock</span><span class="ct" style="left:1123px">30</span><svg class="sbox" width="16" height="14.5" style="left:1395px"><use href="#i-box"/></svg><span class="ct sp" style="left:1420px">Products</span><svg class="ract" width="20" height="20" style="left:1670px;top:11px"><use href="#i-pencil"/></svg><svg class="ract" width="16" height="20" style="left:1713px;top:11px"><use href="#i-trash"/></svg><svg class="ract" width="4" height="18" style="left:1761px;top:13.5px"><use href="#i-kebab"/></svg></div>
<div class="row sel" style="top:225px"><span class="cb" style="left:21px"><svg width="17" height="17"><use href="#i-cb-on"/></svg></span><span class="ct nm" style="left:68px">Black rose</span><span class="ct pr" style="left:332px">3,00 $</span><span class="chip eur" style="left:599px">EUR (Euro)</span><span class="chip" style="left:863px;width:76px">In stock</span><span class="ct" style="left:1123px">26</span><svg class="sbox" width="16" height="14.5" style="left:1395px"><use href="#i-box"/></svg><span class="ct sp" style="left:1420px">Products</span><svg class="ract" width="20" height="20" style="left:1670px;top:11px"><use href="#i-pencil"/></svg><svg class="ract" width="16" height="20" style="left:1713px;top:11px"><use href="#i-trash"/></svg><svg class="ract" width="4" height="18" style="left:1761px;top:13.5px"><use href="#i-kebab"/></svg></div>
<div class="row sel" style="top:270px"><span class="cb" style="left:21px"><svg width="17" height="17"><use href="#i-cb-on"/></svg></span><span class="ct nm" style="left:68px">Daffodil</span><span class="ct pr" style="left:332px">4,00 $</span><span class="chip eur" style="left:599px">EUR (Euro)</span><span class="chip" style="left:863px;width:106px">Out of stock</span><span class="ct" style="left:1123px">21</span><svg class="sbox" width="16" height="14.5" style="left:1395px"><use href="#i-box"/></svg><span class="ct sp" style="left:1420px">Products</span><svg class="ract" width="20" height="20" style="left:1670px;top:11px"><use href="#i-pencil"/></svg><svg class="ract" width="16" height="20" style="left:1713px;top:11px"><use href="#i-trash"/></svg><svg class="ract" width="4" height="18" style="left:1761px;top:13.5px"><use href="#i-kebab"/></svg></div>
<div class="row" style="top:315px"><span class="cb" style="left:21px"><svg width="17" height="17"><use href="#i-cb-off"/></svg></span><span class="ct nm" style="left:68px">Poppy</span><span class="ct pr" style="left:332px">3,00 $</span><span class="chip eur" style="left:599px">EUR (Euro)</span><span class="chip" style="left:863px;width:76px">In stock</span><span class="ct" style="left:1123px">29</span><svg class="sbox" width="16" height="14.5" style="left:1395px"><use href="#i-box"/></svg><span class="ct sp" style="left:1420px">Products</span><svg class="ract" width="20" height="20" style="left:1670px;top:11px"><use href="#i-pencil"/></svg><svg class="ract" width="16" height="20" style="left:1713px;top:11px"><use href="#i-trash"/></svg><svg class="ract" width="4" height="18" style="left:1761px;top:13.5px"><use href="#i-kebab"/></svg></div>
<div class="row" style="top:360px"><span class="cb" style="left:21px"><svg width="17" height="17"><use href="#i-cb-off"/></svg></span><span class="ct nm" style="left:68px">Orchid</span><span class="ct pr" style="left:332px">5,00 $</span><span class="chip eur" style="left:599px">EUR (Euro)</span><span class="chip" style="left:863px;width:76px">In stock</span><span class="ct" style="left:1123px">31</span><svg class="sbox" width="16" height="14.5" style="left:1395px"><use href="#i-box"/></svg><span class="ct sp" style="left:1420px">Products</span><svg class="ract" width="20" height="20" style="left:1670px;top:11px"><use href="#i-pencil"/></svg><svg class="ract" width="16" height="20" style="left:1713px;top:11px"><use href="#i-trash"/></svg><svg class="ract" width="4" height="18" style="left:1761px;top:13.5px"><use href="#i-kebab"/></svg></div>
<div class="row" style="top:405px"><span class="cb" style="left:21px"><svg width="17" height="17"><use href="#i-cb-off"/></svg></span><span class="ct nm" style="left:68px">White rose</span><span class="ct pr" style="left:332px">3,00 $</span><span class="chip eur" style="left:599px">EUR (Euro)</span><span class="chip" style="left:863px;width:76px">In stock</span><span class="ct" style="left:1123px">25</span><svg class="sbox" width="16" height="14.5" style="left:1395px"><use href="#i-box"/></svg><span class="ct sp" style="left:1420px">Products</span><svg class="ract" width="20" height="20" style="left:1670px;top:11px"><use href="#i-pencil"/></svg><svg class="ract" width="16" height="20" style="left:1713px;top:11px"><use href="#i-trash"/></svg><svg class="ract" width="4" height="18" style="left:1761px;top:13.5px"><use href="#i-kebab"/></svg></div>
<div class="row" style="top:450px"><span class="cb" style="left:21px"><svg width="17" height="17"><use href="#i-cb-off"/></svg></span><span class="ct nm" style="left:68px">Dahlias</span><span class="ct pr" style="left:332px">4,00 $</span><span class="chip eur" style="left:599px">EUR (Euro)</span><span class="chip" style="left:863px;width:76px">In stock</span><span class="ct" style="left:1123px">30</span><svg class="sbox" width="16" height="14.5" style="left:1395px"><use href="#i-box"/></svg><span class="ct sp" style="left:1420px">Products</span><svg class="ract" width="20" height="20" style="left:1670px;top:11px"><use href="#i-pencil"/></svg><svg class="ract" width="16" height="20" style="left:1713px;top:11px"><use href="#i-trash"/></svg><svg class="ract" width="4" height="18" style="left:1761px;top:13.5px"><use href="#i-kebab"/></svg></div>
<div class="row" style="top:495px"><span class="cb" style="left:21px"><svg width="17" height="17"><use href="#i-cb-off"/></svg></span><span class="ct nm" style="left:68px">Lily</span><span class="ct pr" style="left:332px">2,00 $</span><span class="chip eur" style="left:599px">EUR (Euro)</span><span class="chip" style="left:863px;width:76px">In stock</span><span class="ct" style="left:1123px">20</span><svg class="sbox" width="16" height="14.5" style="left:1395px"><use href="#i-box"/></svg><span class="ct sp" style="left:1420px">Products</span><svg class="ract" width="20" height="20" style="left:1670px;top:11px"><use href="#i-pencil"/></svg><svg class="ract" width="16" height="20" style="left:1713px;top:11px"><use href="#i-trash"/></svg><svg class="ract" width="4" height="18" style="left:1761px;top:13.5px"><use href="#i-kebab"/></svg></div>
<div class="row" style="top:540px"><span class="cb" style="left:21px"><svg width="17" height="17"><use href="#i-cb-off"/></svg></span><span class="ct nm" style="left:68px">Iris</span><span class="ct pr" style="left:332px">3,00 $</span><span class="chip eur" style="left:599px">EUR (Euro)</span><span class="chip" style="left:863px;width:106px">Out of stock</span><span class="ct" style="left:1123px">23</span><svg class="sbox" width="16" height="14.5" style="left:1395px"><use href="#i-box"/></svg><span class="ct sp" style="left:1420px">Products</span><svg class="ract" width="20" height="20" style="left:1670px;top:11px"><use href="#i-pencil"/></svg><svg class="ract" width="16" height="20" style="left:1713px;top:11px"><use href="#i-trash"/></svg><svg class="ract" width="4" height="18" style="left:1761px;top:13.5px"><use href="#i-kebab"/></svg></div>
<div class="row" style="top:585px"><span class="cb" style="left:21px"><svg width="17" height="17"><use href="#i-cb-off"/></svg></span><span class="ct nm" style="left:68px">Aster</span><span class="ct pr" style="left:332px">3,00 $</span><span class="chip eur" style="left:599px">EUR (Euro)</span><span class="chip" style="left:863px;width:76px">In stock</span><span class="ct" style="left:1123px">20</span><svg class="sbox" width="16" height="14.5" style="left:1395px"><use href="#i-box"/></svg><span class="ct sp" style="left:1420px">Products</span><svg class="ract" width="20" height="20" style="left:1670px;top:11px"><use href="#i-pencil"/></svg><svg class="ract" width="16" height="20" style="left:1713px;top:11px"><use href="#i-trash"/></svg><svg class="ract" width="4" height="18" style="left:1761px;top:13.5px"><use href="#i-kebab"/></svg></div>
<div style="position:absolute;left:0;top:630px;width:100%;height:1px;background:#E6E6EE"></div>
<svg id="addrow" width="16" height="16"><use href="#i-plus"/></svg>
<svg class="abs" style="left:24px;top:779px" width="21" height="17" viewBox="0 0 21 17"><path d="M5 16.2Q0.6 16.2 0.6 12.2Q0.6 8.8 4 8.2Q4.2 4 8.2 3.2Q10.4 0.4 13.8 1.4Q16.8 2.6 16.8 6Q20.4 6.8 20.4 11.2Q20.2 16.2 15.8 16.2Z" fill="none" stroke="#666" stroke-width="1.1"/><path d="M7.4 10.2L9.4 12.2L13.4 8" fill="none" stroke="#666" stroke-width="1.1"/></svg>
<svg class="abs" style="left:62px;top:779px" width="14" height="20" viewBox="0 0 14 20"><path d="M2.4 0.8H11.6M3.6 0.8V6.4Q3.6 8.6 1.4 11V12.8H12.6V11Q10.4 8.6 10.4 6.4V0.8M7 14.6V18.8" fill="none" stroke="#666" stroke-width="1.1"/></svg>
<div class="ft" style="left:94px;top:780px">Auto</div>
<svg class="abs" style="left:132px;top:787px" width="10" height="6" viewBox="0 0 10 6"><path d="M0.2 0.3H9.8L5 5.4Z" fill="#6a6a6a"/></svg>
<div class="ft" style="left:165px;top:780px;letter-spacing:-0.6px">1–12 of 12</div>

</div>
<div class="abs" style="left:1856px;top:812px;width:40px;height:40px;border-radius:14px;background:#E0E0E0;box-shadow:0 2px 4px rgba(0,0,0,0.22),0 1px 2px rgba(0,0,0,0.12)"></div>
<svg class="abs" style="left:1868px;top:824px" width="16" height="16" viewBox="0 0 16 16"><path d="M8 0.6V15.4M0.6 8H15.4" stroke="#7A3BE8" stroke-width="2"/></svg>
<div class="abs" style="left:1812px;top:866px;width:84px;height:48px;border-radius:16px;background:#7636E8;box-shadow:0 3px 5px rgba(0,0,0,0.25),0 1px 3px rgba(0,0,0,0.15)"></div>
<svg class="abs" style="left:1827px;top:880px" width="19" height="19" viewBox="0 0 19 19"><path d="M13.2 1.4Q14.4 0.4 15.6 1.4L17.6 3.4Q18.6 4.6 17.6 5.8L16.2 7.2L11.8 2.8Z" fill="#EEE6FE"/><path d="M10.8 3.8L15.2 8.2L6 17.4L1 18.4Q0.6 18.4 0.6 18L1.6 13Z" fill="#EEE6FE"/><path d="M2.6 14L5 16.4" stroke="#7636E8" stroke-width="1"/></svg>
<div class="abs" style="left:1854px;top:881px;font-size:15.5px;line-height:20px;color:#F3EDFF">Edit</div>

</body></html>
